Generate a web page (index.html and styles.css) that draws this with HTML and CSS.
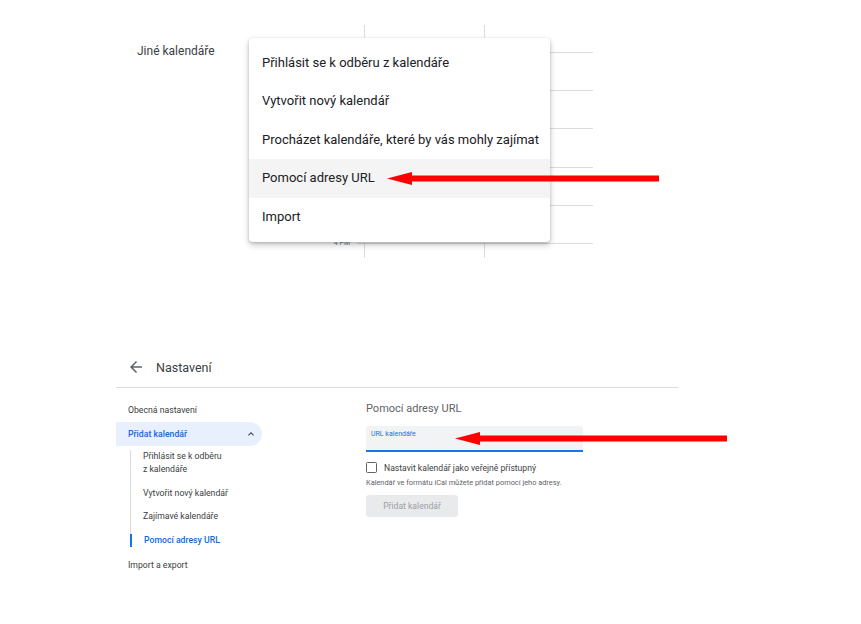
FILE: index.html
```html
<!DOCTYPE html>
<html>
<head lang="cs">
    <meta charset="UTF-8">
    <title>Pomocí adresy URL</title>
    <link rel="stylesheet" href="styles.css">
</head>
<body>
<div class="top">
    <div class="side">Jiné kalendáře</div>
    <div class="gutter"><span class="time">4 PM</span></div>
    <div class="days">
        <div class="hours">
            <div class="hour"></div>
            <div class="hour"></div>
            <div class="hour"></div>
            <div class="hour"></div>
            <div class="hour"></div>
            <div class="hour"></div>
        </div>
        <div class="cols">
            <div class="col"></div>
            <div class="col"></div>
        </div>
    </div>
    <ul class="menu">
        <li>Přihlásit se k odběru z kalendáře</li>
        <li>Vytvořit nový kalendář</li>
        <li>Procházet kalendáře, které by vás mohly zajímat</li>
        <li class="hover">Pomocí adresy URL</li>
        <li>Import</li>
    </ul>
</div>

<div class="settings">
    <div class="header">
        <svg class="back" width="18" height="18" viewBox="0 0 24 24"><path d="M20 11H7.83l5.59-5.59L12 4l-8 8 8 8 1.41-1.41L7.83 13H20v-2z" fill="#5f6368"/></svg>
        <span>Nastavení</span>
    </div>
    <div class="body">
        <div class="nav">
            <div class="nav-item">Obecná nastavení</div>
            <div class="nav-item open">
                <span>Přidat kalendář</span>
                <svg width="12" height="12" viewBox="0 0 24 24"><path d="M12 8l-6 6 1.41 1.41L12 10.83l4.59 4.58L18 14z" fill="#3c4043"/></svg>
            </div>
            <div class="sub">
                <div class="sub-item">Přihlásit se k odběru<br>z kalendáře</div>
                <div class="sub-item">Vytvořit nový kalendář</div>
                <div class="sub-item">Zajímavé kalendáře</div>
                <div class="sub-item active">Pomocí adresy URL</div>
            </div>
            <div class="nav-item">Import a export</div>
        </div>
        <div class="content">
            <div class="content-title">Pomocí adresy URL</div>
            <div class="field"><span class="field-label">URL kalendáře</span></div>
            <div class="check-row">
                <span class="checkbox"></span>
                <span>Nastavit kalendář jako veřejně přístupný</span>
            </div>
            <div class="hint">Kalendář ve formátu iCal můžete přidat pomocí jeho adresy.</div>
            <div class="btn">Přidat kalendář</div>
        </div>
    </div>
</div>

<!-- červené šipky -->
<svg class="arrow arrow-menu" width="274" height="16" viewBox="0 0 274 16">
    <polygon points="1,7.5 26,1 26,14" fill="#f00"/>
    <rect x="25" y="4.5" width="248" height="6" fill="#f00"/>
</svg>
<svg class="arrow arrow-field" width="274" height="16" viewBox="0 0 274 16">
    <polygon points="1,7.5 26,1 26,14" fill="#f00"/>
    <rect x="25" y="4.5" width="248" height="6" fill="#f00"/>
</svg>
</body>
</html>
```

FILE: styles.css
```css
* {
    margin: 0;
    padding: 0;
    box-sizing: border-box;
}

body {
    font-family: Roboto, "Liberation Sans", sans-serif;
    background: #fff;
    color: #3c4043;
    position: relative;
    width: 861px;
    height: 624px;
    overflow: hidden;
}

ul {
    list-style: none;
}

/* horní výřez z kalendáře */
.top {
    position: relative;
    display: flex;
    height: 258px;
    padding-top: 25px;
}

.side {
    width: 300px;
    padding: 19px 0 0 137px;
    font-size: 12px;
    line-height: 14px;
    color: #3c4043;
}

.gutter {
    width: 57px;
    display: flex;
    flex-direction: column;
    justify-content: flex-end;
    align-items: flex-end;
    padding: 0 7px 11px 0;
}

.time {
    font-size: 7px;
    line-height: 8px;
    color: #70757a;
}

.days {
    width: 236px;
    display: grid;
    overflow: hidden;
}

.hours,
.cols {
    grid-area: 1 / 1;
}

.hours {
    padding-top: 27px;
}

.hour {
    height: 38.2px;
    border-top: 1px solid #dadce0;
}

.cols {
    display: flex;
    padding-left: 7px;
}

.col {
    width: 120px;
    border-left: 1px solid #dadce0;
}

.menu {
    position: absolute;
    left: 249px;
    top: 38px;
    width: 301px;
    height: 204px;
    padding: 6px 0;
    background: #fff;
    border-radius: 4px;
    box-shadow: 0 3px 6px rgba(0, 0, 0, 0.22), 0 1px 3px rgba(0, 0, 0, 0.16);
}

.menu li {
    height: 38.4px;
    line-height: 38.4px;
    padding-left: 13px;
    font-size: 13px;
    color: #202124;
    white-space: nowrap;
}

.menu li.hover {
    background: #f4f4f4;
}

/* nastavení */
.settings {
    width: 562px;
    margin: 89px 0 0 116px;
}

.header {
    display: flex;
    align-items: center;
    gap: 11px;
    height: 41px;
    padding-left: 11px;
    border-bottom: 1px solid #dadce0;
    font-size: 12.5px;
    color: #3c4043;
}

.body {
    display: flex;
    padding-top: 10px;
}

.nav {
    width: 146px;
    font-size: 8.7px;
}

.nav-item {
    height: 24px;
    line-height: 24px;
    padding-left: 12px;
    color: #3c4043;
}

.nav-item.open {
    display: flex;
    justify-content: space-between;
    align-items: center;
    padding-right: 5px;
    background: #e8f0fe;
    border-radius: 0 12px 12px 0;
    color: #1967d2;
    font-weight: 500;
}

.sub {
    margin: 4px 0 6.5px 14px;
    border-left: 1px solid #dadce0;
}

.sub-item {
    line-height: 13px;
    padding-left: 12px;
    margin-top: 10.5px;
    color: #3c4043;
}

.sub-item:first-child {
    margin-top: 0;
}

.sub-item.active {
    margin-left: -1px;
    border-left: 2px solid #1a73e8;
    color: #1967d2;
    font-weight: 500;
}

.content {
    margin-left: 104px;
}

.content-title {
    margin-top: 4px;
    font-size: 11px;
    line-height: 14px;
    color: #5f6368;
}

.field {
    width: 217px;
    height: 26px;
    margin-top: 10px;
    padding: 4px 5px;
    background: #f1f3f4;
    border-bottom: 2px solid #1a73e8;
    border-radius: 3px 3px 0 0;
}

.field-label {
    display: block;
    font-size: 7px;
    line-height: 8px;
    color: #1a73e8;
}

.check-row {
    display: flex;
    align-items: center;
    gap: 7px;
    height: 11px;
    margin-top: 10px;
    font-size: 8.6px;
    color: #3c4043;
}

.checkbox {
    width: 11px;
    height: 11px;
    border: 1.5px solid #5f6368;
    border-radius: 1.5px;
}

.hint {
    margin-top: 6px;
    font-size: 7.4px;
    line-height: 8px;
    color: #5f6368;
}

.btn {
    display: flex;
    align-items: center;
    justify-content: center;
    width: 92px;
    height: 22px;
    margin-top: 8px;
    background: #e9eaeb;
    border-radius: 3px;
    font-size: 8.6px;
    color: #9aa0a6;
}

/* šipky leží přes obsah */
.arrow {
    position: absolute;
}

.arrow-menu {
    left: 386px;
    top: 171px;
}

.arrow-field {
    left: 454px;
    top: 431px;
}
```
